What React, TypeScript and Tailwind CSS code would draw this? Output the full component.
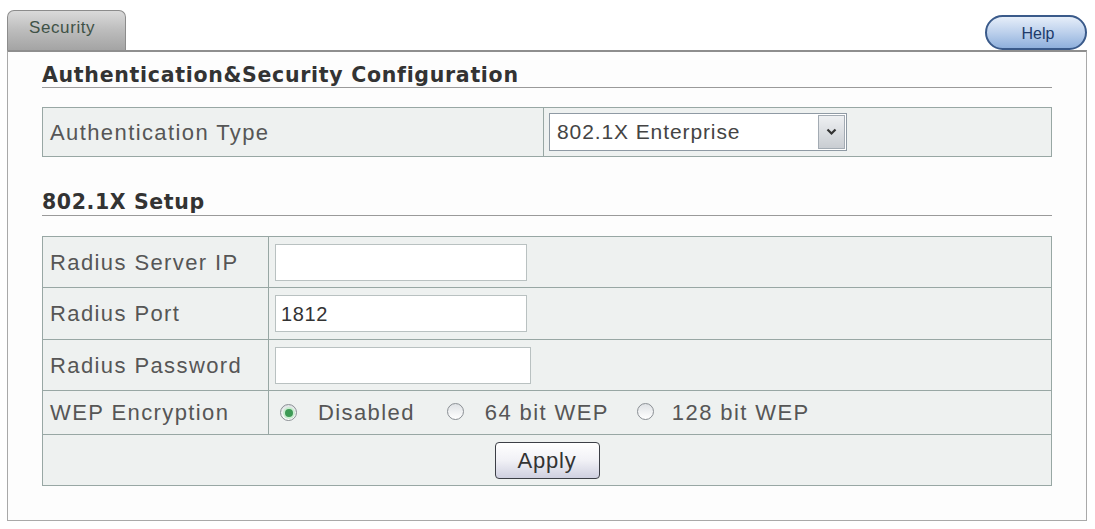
import React from "react";

const label = "font-['Liberation_Sans',Arial,sans-serif] text-[22px] text-[#565656] tracking-[1.4px]";

function Radio({ checked }: { checked?: boolean }) {
  return (
    <span className="inline-flex h-[17px] w-[17px] items-center justify-center rounded-full border border-[#8a8f94] bg-gradient-to-b from-[#dfe2e5] to-[#ffffff]">
      {checked ? <span className="h-[8px] w-[8px] rounded-full bg-[#3d9a55] shadow-[0_0_0_2px_#c9ecd0]" /> : null}
    </span>
  );
}

export default function App() {
  return (
    <div className="relative h-[529px] w-[1095px] bg-white">
      <div className="flex h-[50px] items-end justify-between pl-[7px] pr-[8px]">
        <div className="flex h-[40px] w-[119px] items-start rounded-t-[7px] border border-b-0 border-[#8c8c8c] bg-gradient-to-b from-[#dadada] via-[#bcbcbc] to-[#a4a4a4] pl-[21px] pt-[6px]">
          <span className="font-['Liberation_Sans',Arial,sans-serif] text-[17px] leading-[22px] tracking-[0.6px] text-[#3f5247]">Security</span>
        </div>
        <div className="flex h-[35px] w-[102px] items-center justify-center rounded-full border-2 border-[#3a5a8a] bg-gradient-to-b from-[#e6eef9] via-[#bcd0ec] to-[#8fb0dc] pl-[4px] pt-[2px]">
          <span className="font-['Liberation_Sans',Arial,sans-serif] text-[16px] text-[#203a6a]">Help</span>
        </div>
      </div>
      <div className="mx-[7px] h-[471px] w-[1080px] border border-[#a9a9a9] border-t-[2px] border-t-[#8e8e8e] bg-[#fdfdfd] px-[34px]">
        <div className="h-[36px] border-b border-[#9a9a9a] pt-[11px] font-['DejaVu_Sans',Verdana,sans-serif] text-[20.5px] font-bold leading-[24px] tracking-[0.7px] text-[#333]">
          Authentication&amp;Security Configuration
        </div>
        <table className="mt-[19px] w-[1010px] border-collapse">
          <tbody>
            <tr className="h-[49px]">
              <td className={`w-[501px] border border-[#98a7a4] bg-[#eef1f0] pl-[7px] ${label}`}>Authentication Type</td>
              <td className="border border-[#98a7a4] bg-[#eef1f0] pl-[5px]">
                <div className="flex h-[38px] w-[298px] items-center border border-[#8f9aa4] bg-white">
                  <span className="flex-1 pl-[7px] font-['Liberation_Sans',Arial,sans-serif] text-[21px] text-[#444] tracking-[0.9px]">802.1X Enterprise</span>
                  <span className="mr-[1px] flex h-[34px] w-[27px] items-center justify-center border border-[#a3abb3] bg-gradient-to-b from-[#eef0f2] to-[#c9cdd2]">
                    <svg width="11" height="8" viewBox="0 0 11 8">
                      <path d="M1.5 1.5 L5.5 5.5 L9.5 1.5" fill="none" stroke="#333" strokeWidth="2.2" />
                    </svg>
                  </span>
                </div>
              </td>
            </tr>
          </tbody>
        </table>
        <div className="mt-[33px] h-[26px] border-b border-[#9a9a9a] font-['DejaVu_Sans',Verdana,sans-serif] text-[20.5px] font-bold leading-[24px] tracking-[0.6px] text-[#333]">
          802.1X Setup
        </div>
        <table className="mt-[20px] w-[1010px] border-collapse">
          <tbody>
            <tr className="h-[51px]">
              <td className={`w-[226px] border border-[#98a7a4] bg-[#eef1f0] pl-[7px] ${label}`}>Radius Server IP</td>
              <td className="border border-[#98a7a4] bg-[#eef1f0] pl-[6px]">
                <div className="h-[37px] w-[252px] border border-[#b9c1c1] bg-white" />
              </td>
            </tr>
            <tr className="h-[52px]">
              <td className={`border border-[#98a7a4] bg-[#eef1f0] pl-[7px] ${label}`}>Radius Port</td>
              <td className="border border-[#98a7a4] bg-[#eef1f0] pl-[6px]">
                <div className="flex h-[37px] w-[252px] items-center border border-[#b9c1c1] bg-white pl-[5px] font-['Liberation_Sans',Arial,sans-serif] text-[20px] tracking-[0.6px] text-[#333]">1812</div>
              </td>
            </tr>
            <tr className="h-[51px]">
              <td className={`border border-[#98a7a4] bg-[#eef1f0] pl-[7px] ${label}`}>Radius Password</td>
              <td className="border border-[#98a7a4] bg-[#eef1f0] pl-[6px]">
                <div className="h-[37px] w-[256px] border border-[#b9c1c1] bg-white" />
              </td>
            </tr>
            <tr className="h-[44px]">
              <td className={`border border-[#98a7a4] bg-[#eef1f0] pl-[7px] ${label}`}>WEP Encryption</td>
              <td className="border border-[#98a7a4] bg-[#eef1f0] pl-[11px]">
                <div className={`flex items-center ${label}`}>
                  <Radio checked />
                  <span className="ml-[21px]">Disabled</span>
                  <span className="ml-[32px]"><Radio /></span>
                  <span className="ml-[21px]">64 bit WEP</span>
                  <span className="ml-[28px]"><Radio /></span>
                  <span className="ml-[18px]">128 bit WEP</span>
                </div>
              </td>
            </tr>
            <tr className="h-[51px]">
              <td colSpan={2} className="border border-[#98a7a4] bg-[#eef1f0] text-center">
                <button className="inline-flex h-[37px] w-[105px] items-center justify-center rounded-[4px] border border-[#3c3f46] bg-gradient-to-b from-[#ffffff] via-[#f1f1f6] to-[#cfd0e0] font-['Liberation_Sans',Arial,sans-serif] text-[22px] tracking-[0.8px] text-[#333]">
                  Apply
                </button>
              </td>
            </tr>
          </tbody>
        </table>
      </div>
    </div>
  );
}
